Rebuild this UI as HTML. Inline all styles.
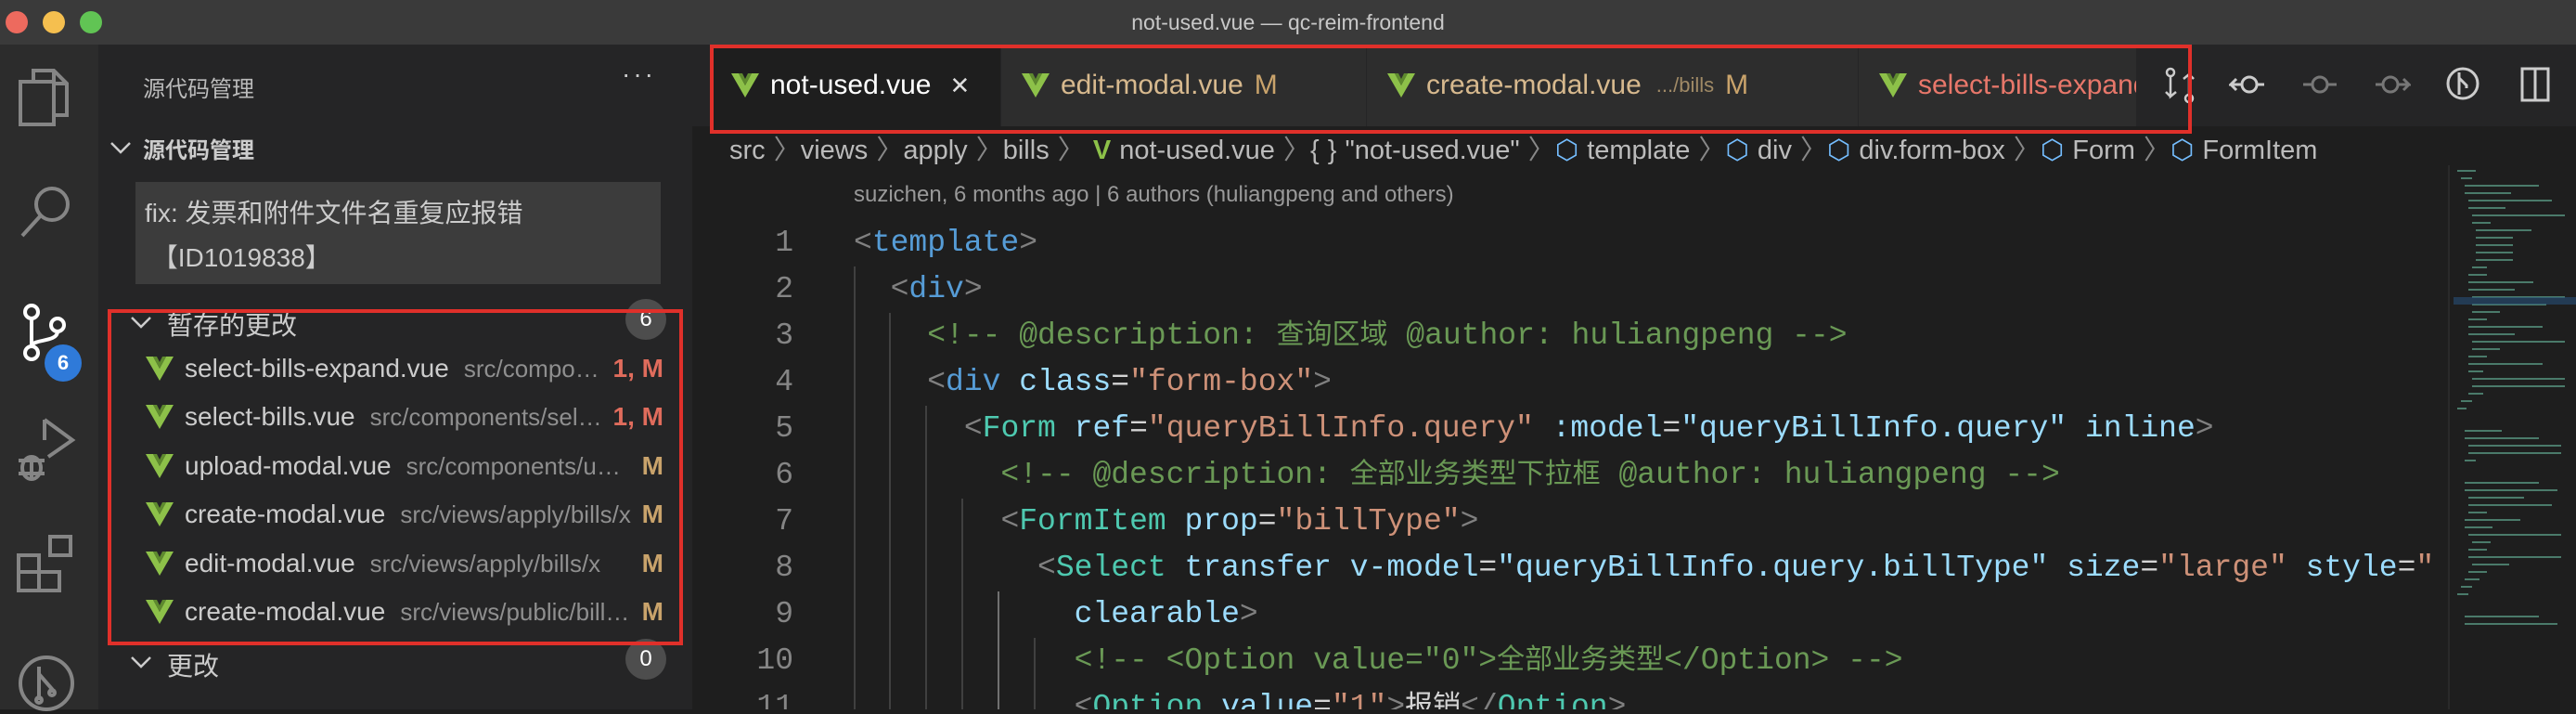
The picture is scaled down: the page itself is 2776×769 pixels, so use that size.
<!DOCTYPE html>
<html><head><meta charset="utf-8">
<style>
*{margin:0;padding:0;box-sizing:border-box}
body{width:2776px;height:764px;overflow:hidden;background:#1e1e1e;font-family:"Liberation Sans","Noto Sans CJK SC",sans-serif;position:relative}
.abs{position:absolute}
#title{left:0;top:0;width:2776px;height:48px;background:#3a3a3a;color:#c8c8c8;font-size:23px;text-align:center;line-height:48px}
.dot{top:12px;width:24px;height:24px;border-radius:50%}
#act{left:0;top:48px;width:106px;height:716px;background:#2c2c2c}
#side{left:106px;top:48px;width:640px;height:716px;background:#252526;color:#ccc}
.t{position:absolute;white-space:nowrap}
.row{position:absolute;left:157px;width:558px;height:50px;display:flex;align-items:center;font-size:28px}
.row .n{color:#ccc;white-space:nowrap;margin-left:12px}
.row .p{color:#8f8f8f;font-size:26px;margin-left:16px;white-space:nowrap;overflow:hidden;text-overflow:ellipsis;flex:1}
.row .s{margin-left:10px;font-weight:bold;white-space:nowrap}
.badge{position:absolute;width:44px;height:44px;border-radius:50%;background:#4d4d4d;color:#fff;font-size:24px;text-align:center;line-height:44px}
#tabs{left:746px;top:48px;width:2030px;height:88px;background:#252526}
.tab{position:absolute;top:0;height:88px;background:#2d2d2d;display:flex;align-items:center;font-size:30px;white-space:nowrap;overflow:hidden;border-right:1px solid #252526}
.tab svg{margin:0 12px 0 22px;flex:none}
#code{left:746px;top:136px;width:1892px;height:628px;overflow:hidden;font-family:"Liberation Mono","Noto Sans CJK SC",monospace}
.ln{position:absolute;left:27px;width:82px;text-align:right;color:#858585;font-size:33px;line-height:50px;height:50px}
.cl{position:absolute;left:174px;font-size:33px;color:#d4d4d4;white-space:pre;line-height:50px;height:50px}
.cj{font-size:30px}
.b{color:#808080}.k{color:#569cd6}.c{color:#4ec9b0}.a{color:#9cdcfe}.s{color:#ce9178}.g{color:#6a9955}
.guide{position:absolute;width:2px;background:#404040}
</style></head><body>
<div id="title" class="abs">not-used.vue — qc-reim-frontend</div>
<div class="abs dot" style="left:6px;background:#ed6a5e"></div>
<div class="abs dot" style="left:46px;background:#f5bf4f"></div>
<div class="abs dot" style="left:86px;background:#61c454"></div>

<div id="act" class="abs">
<svg class="abs" style="left:18px;top:24px" width="60" height="66" viewBox="0 0 60 66" fill="none" stroke="#858585" stroke-width="4"><path d="M18 14V4h22l14 14v34H40"/><path d="M40 4v14h14"/><rect x="4" y="16" width="36" height="46"/></svg>
<svg class="abs" style="left:20px;top:150px" width="60" height="60" viewBox="0 0 60 60" fill="none" stroke="#858585" stroke-width="4"><circle cx="36" cy="22" r="17"/><path d="M24 34L4 56"/></svg>
<svg class="abs" style="left:24px;top:278px" width="50" height="64" viewBox="0 0 50 64" fill="none" stroke="#fff" stroke-width="4"><circle cx="10" cy="10" r="7"/><circle cx="10" cy="54" r="7"/><circle cx="38" cy="24" r="7"/><path d="M10 17v30M38 31c0 12-28 8-28 16"/></svg>
<div class="abs" style="left:48px;top:323px;width:40px;height:40px;border-radius:50%;background:#2f7ad9;color:#fff;font-size:22px;font-weight:bold;text-align:center;line-height:40px">6</div>
<svg class="abs" style="left:18px;top:400px" width="64" height="76" viewBox="0 0 64 76" fill="none" stroke="#858585" stroke-width="4"><path d="M30 4l30 22-26 18"/><path d="M30 4v22"/><ellipse cx="16" cy="56" rx="10" ry="12"/><path d="M2 48h28M2 62h28M16 44v24"/></svg>
<svg class="abs" style="left:18px;top:528px" width="62" height="62" viewBox="0 0 62 62" fill="none" stroke="#858585" stroke-width="4"><rect x="2" y="22" width="22" height="18"/><rect x="2" y="40" width="22" height="20"/><rect x="24" y="40" width="22" height="20"/><rect x="36" y="2" width="22" height="20"/></svg>
<svg class="abs" style="left:18px;top:656px" width="64" height="64" viewBox="0 0 64 64" fill="none" stroke="#858585" stroke-width="4"><circle cx="32" cy="32" r="28"/><path d="M24 14v36M24 22l14 16v4"/><circle cx="24" cy="50" r="3"/><circle cx="38" cy="42" r="3"/></svg>
</div>

<div id="side" class="abs">
<div class="t" style="left:48px;top:28px;font-size:24px;color:#bbb">源代码管理</div>
<div class="t" style="left:564px;top:16px;font-size:28px;color:#ccc;letter-spacing:3px">···</div>
<svg class="abs" style="left:12px;top:104px" width="24" height="14" viewBox="0 0 24 14" fill="none" stroke="#ccc" stroke-width="2.5"><path d="M2 2l10 10 10-10"/></svg>
<div class="t" style="left:48px;top:94px;font-size:24px;font-weight:bold;color:#ccc">源代码管理</div>
<div class="abs" style="left:40px;top:148px;width:566px;height:110px;background:#3c3c3c"></div>
<div class="t" style="left:50px;top:158px;font-size:28px;color:#ccc;line-height:48px">fix: 发票和附件文件名重复应报错<br>&nbsp;【ID1019838】</div>
<svg class="abs" style="left:34px;top:292px" width="24" height="14" viewBox="0 0 24 14" fill="none" stroke="#ccc" stroke-width="2.5"><path d="M2 2l10 10 10-10"/></svg>
<div class="t" style="left:74px;top:281px;font-size:28px;color:#ccc">暂存的更改</div>
<div class="badge" style="left:568px;top:274px">6</div>
<svg class="abs" style="left:34px;top:658px" width="24" height="14" viewBox="0 0 24 14" fill="none" stroke="#ccc" stroke-width="2.5"><path d="M2 2l10 10 10-10"/></svg>
<div class="t" style="left:74px;top:648px;font-size:28px;color:#ccc">更改</div>
<div class="badge" style="left:568px;top:640px">0</div>
</div>

<div class="row" style="top:372px"><svg width="30" height="26" viewBox="0 0 30 26"><path d="M0 0h8l7 13 7-13h8L15 26z" fill="#8dc149"/><path d="M8 0h4l3 6 3-6h4l-7 13z" fill="#5e8a2e"/></svg><span class="n">select-bills-expand.vue</span><span class="p">src/components/select-bills</span><span class="s" style="color:#e06c5c">1, M</span></div>
<div class="row" style="top:424px"><svg width="30" height="26" viewBox="0 0 30 26"><path d="M0 0h8l7 13 7-13h8L15 26z" fill="#8dc149"/><path d="M8 0h4l3 6 3-6h4l-7 13z" fill="#5e8a2e"/></svg><span class="n">select-bills.vue</span><span class="p">src/components/select</span><span class="s" style="color:#e06c5c">1, M</span></div>
<div class="row" style="top:477px"><svg width="30" height="26" viewBox="0 0 30 26"><path d="M0 0h8l7 13 7-13h8L15 26z" fill="#8dc149"/><path d="M8 0h4l3 6 3-6h4l-7 13z" fill="#5e8a2e"/></svg><span class="n">upload-modal.vue</span><span class="p">src/components/upload</span><span class="s" style="color:#c9a36b">M</span></div>
<div class="row" style="top:529px"><svg width="30" height="26" viewBox="0 0 30 26"><path d="M0 0h8l7 13 7-13h8L15 26z" fill="#8dc149"/><path d="M8 0h4l3 6 3-6h4l-7 13z" fill="#5e8a2e"/></svg><span class="n">create-modal.vue</span><span class="p">src/views/apply/bills/x</span><span class="s" style="color:#c9a36b">M</span></div>
<div class="row" style="top:582px"><svg width="30" height="26" viewBox="0 0 30 26"><path d="M0 0h8l7 13 7-13h8L15 26z" fill="#8dc149"/><path d="M8 0h4l3 6 3-6h4l-7 13z" fill="#5e8a2e"/></svg><span class="n">edit-modal.vue</span><span class="p">src/views/apply/bills/x</span><span class="s" style="color:#c9a36b">M</span></div>
<div class="row" style="top:634px"><svg width="30" height="26" viewBox="0 0 30 26"><path d="M0 0h8l7 13 7-13h8L15 26z" fill="#8dc149"/><path d="M8 0h4l3 6 3-6h4l-7 13z" fill="#5e8a2e"/></svg><span class="n">create-modal.vue</span><span class="p">src/views/public/bills/x</span><span class="s" style="color:#c9a36b">M</span></div>
<div class="abs" style="left:116px;top:333px;width:620px;height:362px;border:4px solid #e0302a"></div>

<div id="tabs" class="abs">
<div class="tab" style="left:20px;width:313px;background:#1e1e1e;color:#fff"><svg width="30" height="26" viewBox="0 0 30 26"><path d="M0 0h8l7 13 7-13h8L15 26z" fill="#8dc149"/><path d="M8 0h4l3 6 3-6h4l-7 13z" fill="#5e8a2e"/></svg>not-used.vue<span style="margin-left:20px;font-size:26px;color:#ddd">✕</span></div>
<div class="tab" style="left:333px;width:394px;color:#d7b98e"><svg width="30" height="26" viewBox="0 0 30 26"><path d="M0 0h8l7 13 7-13h8L15 26z" fill="#8dc149"/><path d="M8 0h4l3 6 3-6h4l-7 13z" fill="#5e8a2e"/></svg>edit-modal.vue<span style="margin-left:12px;color:#c9a36b">M</span></div>
<div class="tab" style="left:727px;width:530px;color:#d7b98e"><svg width="30" height="26" viewBox="0 0 30 26"><path d="M0 0h8l7 13 7-13h8L15 26z" fill="#8dc149"/><path d="M8 0h4l3 6 3-6h4l-7 13z" fill="#5e8a2e"/></svg>create-modal.vue<span style="margin-left:16px;font-size:22px;color:#a08a66">.../bills</span><span style="margin-left:12px;color:#c9a36b">M</span></div>
<div class="tab" style="left:1257px;width:300px;color:#e8776a"><svg width="30" height="26" viewBox="0 0 30 26"><path d="M0 0h8l7 13 7-13h8L15 26z" fill="#8dc149"/><path d="M8 0h4l3 6 3-6h4l-7 13z" fill="#5e8a2e"/></svg>select-bills-expand.vue</div>
<svg class="abs" style="left:1586px;top:24px" width="34" height="40" viewBox="0 0 34 40" fill="none" stroke="#ccc" stroke-width="2.5"><circle cx="7" cy="6" r="4"/><path d="M7 10v22l6-5M7 32l-5-5"/><circle cx="27" cy="34" r="4"/><path d="M27 30V8l-6 5M27 8l5 5"/></svg>
<svg class="abs" style="left:1656px;top:28px" width="40" height="30" viewBox="0 0 40 30" fill="none" stroke="#ccc" stroke-width="3"><circle cx="22" cy="15" r="8"/><path d="M30 15h8M14 15H2l6-6M2 15l6 6"/></svg>
<svg class="abs" style="left:1734px;top:28px" width="40" height="30" viewBox="0 0 40 30" fill="none" stroke="#777" stroke-width="3"><circle cx="20" cy="15" r="8"/><path d="M2 15h10M28 15h10"/></svg>
<svg class="abs" style="left:1812px;top:28px" width="40" height="30" viewBox="0 0 40 30" fill="none" stroke="#777" stroke-width="3"><circle cx="18" cy="15" r="8"/><path d="M2 15h8M26 15h12l-6-6M38 15l-6 6"/></svg>
<svg class="abs" style="left:1890px;top:22px" width="36" height="40" viewBox="0 0 36 40" fill="none" stroke="#ccc" stroke-width="3"><circle cx="18" cy="20" r="16"/><path d="M14 8v24M14 14l8 8v3"/></svg>
<svg class="abs" style="left:1970px;top:24px" width="32" height="38" viewBox="0 0 32 38" fill="none" stroke="#ccc" stroke-width="3"><rect x="2" y="2" width="28" height="34"/><path d="M16 2v34"/></svg>
</div>
<div class="abs" style="left:765px;top:48px;width:1597px;height:96px;border:4px solid #e0302a"></div>

<div class="abs" style="left:2638px;top:178px;width:138px;height:586px;background:#1e1e1e;border-left:2px solid #2a2a2a">
<svg width="138" height="586" viewBox="0 0 138 586" stroke-width="2">
<g stroke="#4a7a6a"><path d="M8 6h20M12 14h12M16 22h80M16 30h50M20 38h90M20 46h40M24 54h100M24 62h20M28 70h60M28 78h40M28 86h40M28 94h40M28 102h40M24 110h16M20 118h20M20 126h70M20 134h50M24 142h100M24 150h80M24 158h30M20 166h20M20 174h80M20 182h50M24 190h100M24 198h30M20 206h20M20 214h80M20 222h16M24 230h100M24 238h100M20 246h16M12 254h12M8 262h10M16 286h40M16 294h80M20 302h100M20 310h100M16 318h12M16 342h80M16 350h100M20 358h60M20 366h90M20 374h20M16 382h60M16 390h30M20 398h100M24 406h20M20 414h20M20 422h100M24 430h40M20 438h20M16 446h16M12 454h12M8 462h12M16 486h80M16 494h100"/></g>
<rect x="4" y="142" width="134" height="8" fill="#264f78" opacity="0.6"/>
</svg></div>

<div class="t" style="left:786px;top:138px;font-size:29px;color:#bbb;word-spacing:1px">src <span style="color:#888">〉</span>views <span style="color:#888">〉</span>apply <span style="color:#888">〉</span>bills <span style="color:#888">〉</span> <span style="color:#8dc149;font-weight:bold">V</span> not-used.vue <span style="color:#888">〉</span>{ } "not-used.vue" <span style="color:#888">〉</span><span style="color:#75beff">⬡</span> template <span style="color:#888">〉</span><span style="color:#75beff">⬡</span> div <span style="color:#888">〉</span><span style="color:#75beff">⬡</span> div.form-box <span style="color:#888">〉</span><span style="color:#75beff">⬡</span> Form <span style="color:#888">〉</span><span style="color:#75beff">⬡</span> FormItem</div>

<div id="code" class="abs">
<div class="t" style="left:174px;top:60px;font-size:24px;color:#999;font-family:'Liberation Sans','Noto Sans CJK SC',sans-serif">suzichen, 6 months ago | 6 authors (huliangpeng and others)</div>
<div class="guide" style="left:174px;top:151px;height:500px"></div>
<div class="guide" style="left:212px;top:201px;height:450px"></div>
<div class="guide" style="left:251px;top:301px;height:350px"></div>
<div class="guide" style="left:290px;top:401px;height:250px"></div>
<div class="guide" style="left:329px;top:501px;height:150px;background:#707070"></div>
<div class="guide" style="left:368px;top:551px;height:100px"></div>
<div class="ln" style="top:101px">1</div><div class="cl" style="top:101px"><span class="b">&lt;</span><span class="k">template</span><span class="b">&gt;</span></div>
<div class="ln" style="top:151px">2</div><div class="cl" style="top:151px">  <span class="b">&lt;</span><span class="k">div</span><span class="b">&gt;</span></div>
<div class="ln" style="top:201px">3</div><div class="cl g" style="top:201px">    &lt;!-- @description: <span class="cj">查询区域</span> @author: huliangpeng --&gt;</div>
<div class="ln" style="top:251px">4</div><div class="cl" style="top:251px">    <span class="b">&lt;</span><span class="k">div</span> <span class="a">class</span>=<span class="s">"form-box"</span><span class="b">&gt;</span></div>
<div class="ln" style="top:301px">5</div><div class="cl" style="top:301px">      <span class="b">&lt;</span><span class="c">Form</span> <span class="a">ref</span>=<span class="s">"queryBillInfo.query"</span> <span class="a">:model</span>=<span class="a">"queryBillInfo.query"</span> <span class="a">inline</span><span class="b">&gt;</span></div>
<div class="ln" style="top:351px">6</div><div class="cl g" style="top:351px">        &lt;!-- @description: <span class="cj">全部业务类型下拉框</span> @author: huliangpeng --&gt;</div>
<div class="ln" style="top:401px">7</div><div class="cl" style="top:401px">        <span class="b">&lt;</span><span class="c">FormItem</span> <span class="a">prop</span>=<span class="s">"billType"</span><span class="b">&gt;</span></div>
<div class="ln" style="top:451px">8</div><div class="cl" style="top:451px">          <span class="b">&lt;</span><span class="c">Select</span> <span class="a">transfer</span> <span class="a">v-model</span>=<span class="a">"queryBillInfo.query.billType"</span> <span class="a">size</span>=<span class="s">"large"</span> <span class="a">style</span>=<span class="s">"</span></div>
<div class="ln" style="top:501px">9</div><div class="cl" style="top:501px">            <span class="a">clearable</span><span class="b">&gt;</span></div>
<div class="ln" style="top:551px">10</div><div class="cl g" style="top:551px">            &lt;!-- &lt;Option value="0"&gt;<span class="cj">全部业务类型</span>&lt;/Option&gt; --&gt;</div>
<div class="ln" style="top:601px">11</div><div class="cl" style="top:601px">            <span class="b">&lt;</span><span class="c">Option</span> <span class="a">value</span>=<span class="s">"1"</span><span class="b">&gt;</span><span class="cj">报销</span><span class="b">&lt;/</span><span class="c">Option</span><span class="b">&gt;</span></div>
</div>
</body></html>
